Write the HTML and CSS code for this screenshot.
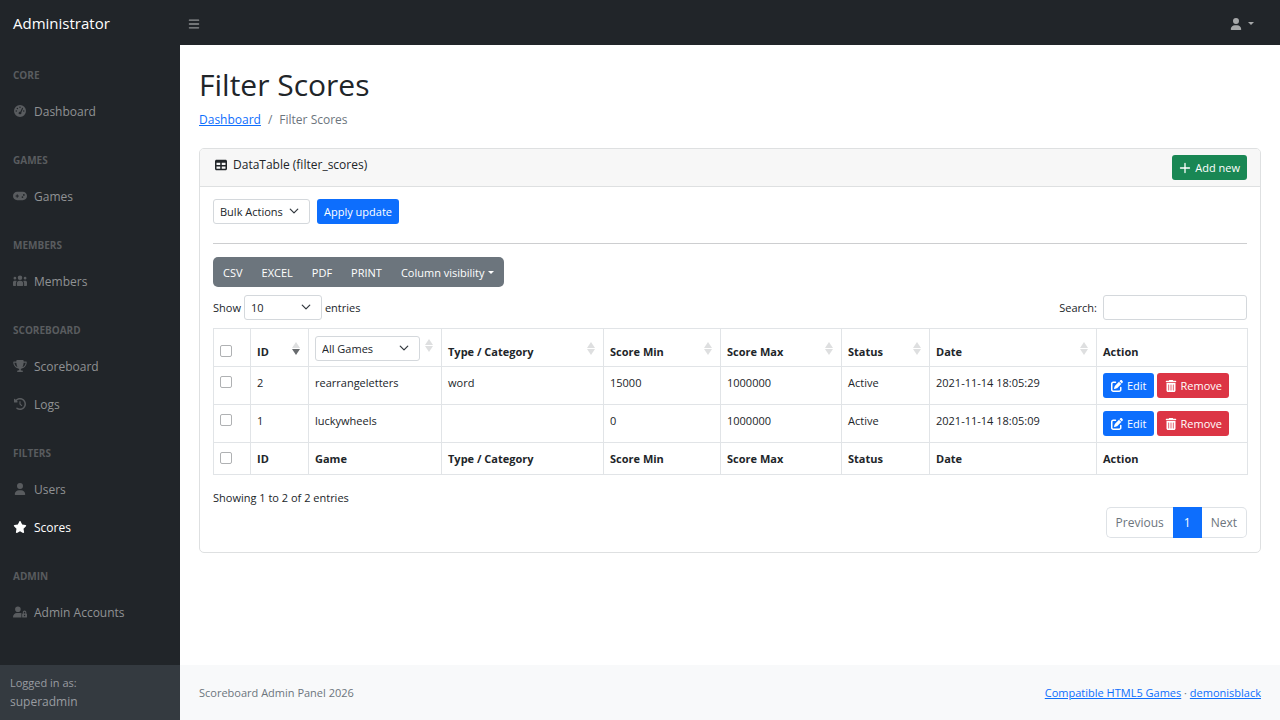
FILE: index.html
```html
<!DOCTYPE html>
<html lang="en">
<head>
<meta charset="utf-8">
<meta name="viewport" content="width=device-width, initial-scale=1">
<title>Filter Scores - Administrator</title>
<link rel="stylesheet" href="styles.css">
</head>
<body>
<svg class="sprite" aria-hidden="true">
  <symbol id="user" viewBox="0 0 448 512"><path d="M224 256A128 128 0 1 0 224 0a128 128 0 1 0 0 256zm-45.7 48C79.8 304 0 383.8 0 482.3C0 498.7 13.3 512 29.7 512H418.3c16.4 0 29.7-13.3 29.7-29.7C448 383.8 368.2 304 269.7 304H178.3z"/></symbol>
  <symbol id="bars" viewBox="0 0 448 512"><path d="M28 64H420a28 28 0 0 1 0 56H28a28 28 0 0 1 0-56zM28 228H420a28 28 0 0 1 0 56H28a28 28 0 0 1 0-56zM28 392H420a28 28 0 0 1 0 56H28a28 28 0 0 1 0-56z"/></symbol>
  <symbol id="gauge" viewBox="0 0 512 512"><path fill-rule="evenodd" d="M0 256a256 256 0 1 1 512 0A256 256 0 1 1 0 256zM256 64a32 32 0 1 0 0 64 32 32 0 1 0 0-64zM144 112a32 32 0 1 0 0 64 32 32 0 1 0 0-64zM96 224a32 32 0 1 0 0 64 32 32 0 1 0 0-64zM416 224a32 32 0 1 0 0 64 32 32 0 1 0 0-64zM381 156c6-12 0-26-11-32s-27-1-32 11L272 289c-38-3-80 24-80 63a64 64 0 1 0 124-43z"/></symbol>
  <symbol id="gamepad" viewBox="0 0 640 512"><path fill-rule="evenodd" d="M192 64C86 64 0 150 0 256s86 192 192 192H448c106 0 192-86 192-192s-86-192-192-192zM496 168a40 40 0 1 1 0 80 40 40 0 1 1 0-80zM392 304a40 40 0 1 1 80 0 40 40 0 1 1-80 0zM168 200a24 24 0 0 1 48 0v32h32a24 24 0 0 1 0 48h-32v32a24 24 0 0 1-48 0v-32h-32a24 24 0 0 1 0-48h32z"/></symbol>
  <symbol id="users" viewBox="0 0 640 512"><path d="M88 64a64 64 0 1 0 0 128 64 64 0 1 0 0-128zM552 64a64 64 0 1 0 0 128 64 64 0 1 0 0-128zM320 0a104 104 0 1 0 0 208 104 104 0 1 0 0-208zM72 240h48c20 0 38 8 51 20-24 32-39 72-39 116v104H32c-18 0-32-14-32-32V312c0-40 32-72 72-72zM568 240h-48c-20 0-38 8-51 20 24 32 39 72 39 116v104h100c18 0 32-14 32-32V312c0-40-32-72-72-72zM288 248h64c62 0 112 50 112 112v88c0 18-14 32-32 32H208c-18 0-32-14-32-32v-88c0-62 50-112 112-112z"/></symbol>
  <symbol id="trophy" viewBox="0 0 576 512"><path d="M400 0H176c-26.5 0-48.1 21.8-47.1 48.2c.2 5.3 .4 10.6 .7 15.8H24C10.7 64 0 74.7 0 88c0 92.6 33.5 157 78.5 200.7c44.3 43.1 98.3 64.8 138.1 75.8c23.4 6.5 39.4 26 39.4 45.6c0 20.9-17 37.900-37.900 37.900H192c-17.700 0-32 14.300-32 32s14.300 32 32 32H384c17.700 0 32-14.300 32-32s-14.300-32-32-32H357.900C337 448 320 431 320 410.100c0-19.600 15.900-39.200 39.400-45.600c39.900-11 93.900-32.700 138.200-75.800C542.500 245 576 180.600 576 88c0-13.300-10.700-24-24-24H446.400c.3-5.200 .5-10.400 .7-15.800C448.100 21.800 426.500 0 400 0zM48.900 112h84.400c9.100 90.100 29.200 150.300 51.900 190.600c-24.900-11-50.800-26.500-73.200-48.300c-32-31.100-58-76-63-142.300zM464.100 254.300c-22.400 21.800-48.300 37.300-73.200 48.300c22.700-40.300 42.800-100.500 51.900-190.600h84.400c-5.100 66.300-31.100 111.200-63 142.300z"/></symbol>
  <symbol id="history" viewBox="0 0 512 512"><path d="M75 75L41 41C25.900 25.900 0 36.600 0 57.900V168c0 13.300 10.700 24 24 24H134.100c21.400 0 32.100-25.900 17-41l-30.800-30.800C155 85.500 203 64 256 64c106 0 192 86 192 192s-86 192-192 192c-40.800 0-78.600-12.700-109.700-34.400c-14.500-10.100-34.400-6.600-44.600 7.900s-6.600 34.400 7.900 44.600C151.200 495 201.700 512 256 512c141.400 0 256-114.600 256-256S397.400 0 256 0C185.300 0 121.300 28.700 75 75zm181 53c-13.300 0-24 10.700-24 24V256c0 6.400 2.500 12.500 7 17l72 72c9.400 9.400 24.600 9.400 33.900 0s9.400-24.600 0-33.900l-65-65V152c0-13.300-10.700-24-24-24z"/></symbol>
  <symbol id="star" viewBox="0 0 576 512"><path d="M316.900 18C311.600 7 300.400 0 288.100 0s-23.400 7-28.800 18L195 150.300 51.400 171.500c-12 1.800-22 10.200-25.700 21.700s-.7 24.200 7.900 32.700L137.800 329 113.200 474.700c-2 12 3 24.200 12.900 31.300s23 8 33.800 2.300l128.300-68.500 128.300 68.500c10.800 5.700 23.900 4.900 33.800-2.300s14.900-19.300 12.900-31.300L438.500 329 542.700 225.900c8.600-8.500 11.700-21.200 7.900-32.700s-13.700-19.900-25.700-21.700L381.200 150.300 316.900 18z"/></symbol>
  <symbol id="user-lock" viewBox="0 0 640 512"><path fill-rule="evenodd" d="M224 256A128 128 0 1 0 224 0a128 128 0 1 0 0 256zM178 304C80 304 0 384 0 482c0 17 13 30 30 30h362c-5-9-8-20-8-32V352c0-14 5-27 13-37-34-9-76-11-127-11zM528 192c-44 0-80 36-80 80v48c-18 0-32 14-32 32v128c0 18 14 32 32 32h160c18 0 32-14 32-32V352c0-18-14-32-32-32v-48c0-44-36-80-80-80zM496 272a32 32 0 0 1 64 0v48h-64zM528 384a32 32 0 1 1 0 64 32 32 0 1 1 0-64z"/></symbol>
  <symbol id="table" viewBox="0 0 512 512"><path fill-rule="evenodd" d="M64 32h384c35 0 64 29 64 64v320c0 35-29 64-64 64H64c-35 0-64-29-64-64V96c0-35 29-64 64-64zM64 160v96h160v-96zM288 160v96h160v-96zM64 320v96h160v-96zM288 320v96h160v-96z"/></symbol>
  <symbol id="plus" viewBox="0 0 448 512"><path d="M196 64a28 28 0 0 1 56 0v164h164a28 28 0 0 1 0 56H252v164a28 28 0 0 1-56 0V284H32a28 28 0 0 1 0-56h164z"/></symbol>
  <symbol id="edit" viewBox="0 0 512 512"><path d="M471.600 21.700c-21.900-21.900-57.300-21.900-79.200 0L362.300 51.700l97.900 97.900 30.100-30.100c21.900-21.900 21.900-57.300 0-79.200L471.600 21.700zm-299.200 220c-6.100 6.100-10.800 13.600-13.500 21.900l-29.600 88.800c-2.900 8.600-.6 18.100 5.800 24.600s15.900 8.700 24.600 5.800l88.800-29.600c8.200-2.700 15.700-7.400 21.900-13.500L437.700 172.300 339.700 74.300 172.400 241.700zM96 64C43 64 0 107 0 160V416c0 53 43 96 96 96H352c53 0 96-43 96-96V320c0-17.700-14.300-32-32-32s-32 14.300-32 32v96c0 17.700-14.300 32-32 32H96c-17.700 0-32-14.300-32-32V160c0-17.700 14.300-32 32-32h96c17.700 0 32-14.300 32-32s-14.300-32-32-32H96z"/></symbol>
  <symbol id="trash" viewBox="0 0 448 512"><path fill-rule="evenodd" d="M135 18c6-11 17-18 29-18h120c12 0 23 7 29 18l7 14h96a32 32 0 0 1 0 64H32a32 32 0 0 1 0-64h96zM32 128h384v320c0 35-29 64-64 64H96c-35 0-64-29-64-64zM128 192c-9 0-16 7-16 16v224a16 16 0 0 0 32 0V208c0-9-7-16-16-16zM224 192c-9 0-16 7-16 16v224a16 16 0 0 0 32 0V208c0-9-7-16-16-16zM320 192c-9 0-16 7-16 16v224a16 16 0 0 0 32 0V208c0-9-7-16-16-16z"/></symbol>
  <symbol id="chevron" viewBox="0 0 16 16"><path d="M2 5l6 6 6-6" fill="none" stroke="#343a40" stroke-width="2" stroke-linecap="round" stroke-linejoin="round"/></symbol>
</svg>
<header class="topbar">
  <a class="brand" href="#">Administrator</a>
  <button class="toggle" type="button" aria-label="Toggle sidebar"><svg class="icon"><use href="#bars"/></svg></button>
  <button class="account" type="button" aria-label="Account menu"><svg class="icon"><use href="#user"/></svg><span class="caret"></span></button>
</header>
<div class="layout">
  <aside class="sidebar">
    <nav class="menu">
      <h2 class="menu-heading">Core</h2>
      <a class="menu-link" href="#"><svg class="menu-icon"><use href="#gauge"/></svg>Dashboard</a>
      <h2 class="menu-heading">Games</h2>
      <a class="menu-link" href="#"><svg class="menu-icon"><use href="#gamepad"/></svg>Games</a>
      <h2 class="menu-heading">Members</h2>
      <a class="menu-link" href="#"><svg class="menu-icon"><use href="#users"/></svg>Members</a>
      <h2 class="menu-heading">Scoreboard</h2>
      <a class="menu-link" href="#"><svg class="menu-icon"><use href="#trophy"/></svg>Scoreboard</a>
      <a class="menu-link" href="#"><svg class="menu-icon"><use href="#history"/></svg>Logs</a>
      <h2 class="menu-heading">Filters</h2>
      <a class="menu-link" href="#"><svg class="menu-icon"><use href="#user"/></svg>Users</a>
      <a class="menu-link active" href="#"><svg class="menu-icon"><use href="#star"/></svg>Scores</a>
      <h2 class="menu-heading">Admin</h2>
      <a class="menu-link" href="#"><svg class="menu-icon"><use href="#user-lock"/></svg>Admin Accounts</a>
    </nav>
    <div class="session"><div class="session-label">Logged in as:</div>superadmin</div>
  </aside>
  <div class="page">
    <main class="content">
      <h1 class="title">Filter Scores</h1>
      <nav class="breadcrumb" aria-label="Breadcrumb"><a href="#">Dashboard</a><span>/</span><span>Filter Scores</span></nav>
      <section class="card">
        <div class="card-header">
          <div class="card-title"><svg class="icon"><use href="#table"/></svg>DataTable (filter_scores)</div>
          <button class="btn green" type="button"><svg class="icon"><use href="#plus"/></svg>Add new</button>
        </div>
        <div class="card-body">
          <div class="bulk">
            <span class="select bulk-select"><select aria-label="Bulk actions"><option>Bulk Actions</option></select><svg class="chevron"><use href="#chevron"/></svg></span>
            <button class="btn blue" type="button">Apply update</button>
          </div>
          <hr class="rule">
          <div class="export">
            <button type="button">CSV</button><button type="button">EXCEL</button><button type="button">PDF</button><button type="button">PRINT</button><button type="button">Column visibility<span class="caret"></span></button>
          </div>
          <div class="controls">
            <div class="control"><label for="length">Show</label>
              <span class="select length-select"><select id="length"><option>10</option></select><svg class="chevron"><use href="#chevron"/></svg></span>
              <label for="length">entries</label></div>
            <div class="control search"><label for="search">Search:</label><input id="search" type="search"></div>
          </div>
          <table class="table">
            <colgroup><col class="c-check"><col class="c-id"><col class="c-game"><col class="c-type"><col class="c-min"><col class="c-max"><col class="c-status"><col class="c-date"><col class="c-action"></colgroup>
            <thead>
              <tr>
                <th><input type="checkbox" aria-label="Select all rows"></th>
                <th><div class="head">ID<span class="sort desc"></span></div></th>
                <th><div class="head"><span class="select game-select"><select aria-label="Game"><option>All Games</option></select><svg class="chevron"><use href="#chevron"/></svg></span><span class="sort"></span></div></th>
                <th><div class="head">Type / Category<span class="sort"></span></div></th>
                <th><div class="head">Score Min<span class="sort"></span></div></th>
                <th><div class="head">Score Max<span class="sort"></span></div></th>
                <th><div class="head">Status<span class="sort"></span></div></th>
                <th><div class="head">Date<span class="sort"></span></div></th>
                <th><div class="head">Action</div></th>
              </tr>
            </thead>
            <tbody>
              <tr>
                <td><input type="checkbox" aria-label="Select row 2"></td><td>2</td><td>rearrangeletters</td><td>word</td><td>15000</td><td>1000000</td><td>Active</td><td>2021-11-14 18:05:29</td>
                <td><div class="actions"><button class="btn blue" type="button"><svg class="icon"><use href="#edit"/></svg>Edit</button><button class="btn red" type="button"><svg class="icon"><use href="#trash"/></svg>Remove</button></div></td>
              </tr>
              <tr>
                <td><input type="checkbox" aria-label="Select row 1"></td><td>1</td><td>luckywheels</td><td></td><td>0</td><td>1000000</td><td>Active</td><td>2021-11-14 18:05:09</td>
                <td><div class="actions"><button class="btn blue" type="button"><svg class="icon"><use href="#edit"/></svg>Edit</button><button class="btn red" type="button"><svg class="icon"><use href="#trash"/></svg>Remove</button></div></td>
              </tr>
            </tbody>
            <tfoot>
              <tr><th><input type="checkbox" aria-label="Select all rows"></th><th>ID</th><th>Game</th><th>Type / Category</th><th>Score Min</th><th>Score Max</th><th>Status</th><th>Date</th><th>Action</th></tr>
            </tfoot>
          </table>
          <div class="info">Showing 1 to 2 of 2 entries</div>
          <div class="pagination"><button type="button">Previous</button><button class="current" type="button">1</button><button type="button">Next</button></div>
        </div>
      </section>
    </main>
    <footer class="footer">
      <div>Scoreboard Admin Panel 2026</div>
      <div><a href="#">Compatible HTML5 Games</a> · <a href="#">demonisblack</a></div>
    </footer>
  </div>
</div>
</body>
</html>
```
FILE: styles.css
```css
* { box-sizing: border-box; }
body {
  margin: 0;
  min-height: 100vh;
  display: flex;
  flex-direction: column;
  font-family: "Open Sans", "Noto Sans", sans-serif;
  font-size: 12px;
  line-height: 19px;
  color: #212529;
  background: #fff;
}
button, select, input { font: inherit; color: inherit; margin: 0; }
button { border: 0; background: none; padding: 0; cursor: pointer; }
a { color: #0d6efd; }
.sprite { display: none; }
.icon { width: 12px; height: 12px; fill: currentColor; flex: none; }
.caret {
  display: inline-block;
  border: 3px solid transparent;
  border-top-color: currentColor;
  border-bottom: 0;
}

.topbar {
  display: flex;
  align-items: center;
  height: 45px;
  padding-top: 2px;
  background: #212529;
  color: #909294;
}
.brand { width: 180px; padding-left: 13px; font-size: 15px; color: #fff; text-decoration: none; }
.toggle { display: flex; padding: 0 8px; }
.account { display: flex; align-items: center; gap: 6px; margin-left: auto; padding-right: 26px; color: #a6a8a9; }

.layout { display: flex; flex: 1; }
.sidebar { width: 180px; flex: none; display: flex; flex-direction: column; background: #212529; }
.menu { flex: 1; }
.menu-heading {
  margin: 0;
  padding: 22px 13px 9px;
  font-size: 10px;
  line-height: 16px;
  font-weight: 700;
  text-transform: uppercase;
  color: #595c5f;
}
.menu-link {
  display: flex;
  align-items: center;
  gap: 7px;
  height: 38px;
  padding: 0 13px;
  color: #909294;
  text-decoration: none;
}
.menu-icon { width: 14px; height: 12px; fill: #595c5f; }
.active, .active .menu-icon { color: #fff; fill: #fff; }
.session { height: 55px; padding: 9px 10px; background: #343a40; color: #999ca0; }
.session-label { font-size: 11px; line-height: 18px; }

.page { flex: 1; min-width: 0; display: flex; flex-direction: column; }
.content { flex: 1; padding: 20px 19px 0; }
.title { margin: 0; font-size: 30px; line-height: 40px; font-weight: 400; }
.breadcrumb { display: flex; gap: 7px; margin: 5px 0 19px; color: #6c757d; }

.card { border: 1px solid #dee0e1; border-radius: 5px; }
.card-header {
  display: flex;
  justify-content: space-between;
  align-items: flex-start;
  padding: 6px 13px;
  background: #f7f7f7;
  border-bottom: 1px solid #dee0e1;
  border-radius: 4px 4px 0 0;
}
.card-title { display: flex; align-items: center; gap: 6px; padding-left: 2px; }
.card-body { padding: 12px 13px 14px; font-size: 11px; }
.btn {
  display: inline-flex;
  align-items: center;
  gap: 4px;
  height: 25px;
  padding: 0 7px;
  border-radius: 3px;
  color: #fff;
  font-size: 11px;
  white-space: nowrap;
}
.blue { background: #0d6efd; }
.red { background: #dc3545; }
.green { background: #198754; }

.select { position: relative; display: inline-block; font-weight: 400; }
.select select {
  appearance: none;
  width: 100%;
  height: 25px;
  padding: 0 6px;
  border: 1px solid #d4d8dc;
  border-radius: 3px;
  background: #fff;
  display: block;
}
.chevron { position: absolute; right: 11px; top: 7px; width: 10px; height: 10px; pointer-events: none; }
.bulk { display: flex; gap: 7px; }
.bulk-select { width: 97px; }
.length-select { width: 78px; }
.game-select { width: 105px; }
.rule { margin: 19px 0 13px; border: 0; border-top: 1px solid #cdced0; }

.export { display: inline-flex; height: 30px; border-radius: 5px; background: #6c757d; color: #fff; }
.export button { padding: 0 10px 0 9px; }
.export button:first-child { padding-left: 10px; }
.export .caret { margin-left: 3px; vertical-align: 3px; }
.controls { display: flex; justify-content: space-between; margin: 8px 0; }
.control { display: flex; align-items: center; gap: 3px; }
.search { gap: 6px; }
.search input { width: 144px; height: 25px; border: 1px solid #d4d8dc; border-radius: 3px; background: #fff; }

.table { width: 100%; table-layout: fixed; border-collapse: collapse; }
.table th, .table td {
  padding: 6px;
  border: 1px solid #e1e4e7;
  text-align: left;
  vertical-align: top;
}
.table thead th { vertical-align: bottom; padding: 7px 6px 5px; }
.table th { font-weight: 700; }
.c-check { width: 37px; }
.c-id { width: 58px; }
.c-game { width: 133px; }
.c-type { width: 162px; }
.c-min { width: 117px; }
.c-max { width: 121px; }
.c-status { width: 88px; }
.c-date { width: 167px; }
.c-action { width: 151px; }
.head { display: flex; justify-content: space-between; align-items: center; }
.sort { position: relative; width: 8px; height: 13px; margin: 0 2px 6px 0; }
.sort::before, .sort::after {
  content: "";
  position: absolute;
  left: 0;
  border: 4px solid transparent;
}
.sort::before { top: 0; border-top: 0; border-bottom: 6px solid #dedfe0; }
.sort::after { bottom: 0; border-bottom: 0; border-top: 6px solid #dedfe0; }
.desc::after { border-top-color: #686b6e; }
input[type="checkbox"] {
  appearance: none;
  display: block;
  width: 12px;
  height: 12px;
  margin: 3px 0 4px;
  border: 1px solid #afb1b3;
  border-radius: 2px;
  background: #fff;
}
.actions { display: flex; gap: 3px; }
.actions .btn { padding: 0 7px 0 8px; }

.info { margin-top: 13px; }
.pagination { display: flex; justify-content: flex-end; font-size: 12px; color: #6c757d; }
.pagination button { height: 31px; padding: 0 9px; border: 1px solid #dee2e6; background: #fff; }
.pagination button:first-child { border-radius: 5px 0 0 5px; border-right: 0; }
.pagination button:last-child { border-radius: 0 5px 5px 0; border-left: 0; }
.pagination .current { padding: 0 10px; border-color: #0d6efd; background: #0d6efd; color: #fff; }

.footer {
  display: flex;
  justify-content: space-between;
  align-items: center;
  height: 55px;
  padding: 0 19px;
  background: #f8f9fa;
  color: #6c757d;
  font-size: 11px;
}
```
